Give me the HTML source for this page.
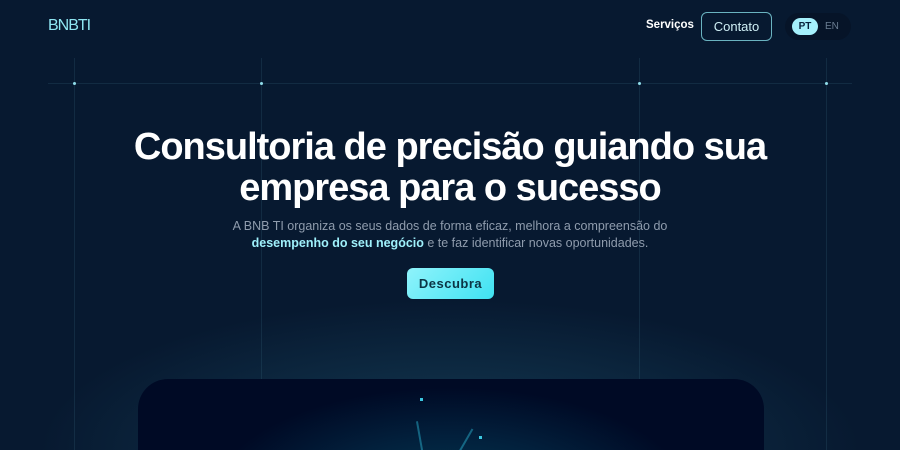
<!DOCTYPE html>
<html><head><meta charset="utf-8"><style>
*{margin:0;padding:0;box-sizing:border-box}
html,body{width:900px;height:450px;overflow:hidden}
body{background:#071930;font-family:"Liberation Sans",sans-serif}
#w{position:relative;width:900px;height:450px;overflow:hidden}
.glow{position:absolute;left:40px;top:250px;width:820px;height:200px;border-radius:50% 50% 0 0/100% 100% 0 0;background:radial-gradient(ellipse 410px 150px at 50% 100%,rgba(30,80,100,.8) 0%,rgba(20,60,85,.5) 50%,rgba(7,25,48,0) 100%)}
.vl{position:absolute;top:58px;height:392px;width:1px;background:rgba(60,110,130,.22)}
.hl{position:absolute;left:48px;width:804px;top:83px;height:1px;background:rgba(60,110,130,.22)}
.dot{position:absolute;top:82px;width:3px;height:3px;background:#8fdcea;border-radius:50%}
.logo{position:absolute;left:48px;top:17px;color:#8fe6f2;font-size:16px;letter-spacing:-1px}
.nav{position:absolute;left:646px;top:19px;color:#fff;font-size:11.5px;font-weight:bold}
.btn{position:absolute;left:701px;top:12px;width:71px;height:29px;border:1px solid #6ab3c0;border-radius:6px;color:#cfeff5;font-size:13px;text-align:center;line-height:27px}
.lang{position:absolute;left:785px;top:13px;width:66px;height:27px;border-radius:14px;background:#061428}
.pt{position:absolute;left:7px;top:5px;width:26px;height:17px;border-radius:9px;background:#a5f0fb;color:#07213a;font-size:10px;font-weight:bold;text-align:center;line-height:17px}
.en{position:absolute;left:40px;top:5px;color:#6a7d92;font-size:10px;line-height:17px}
h1{position:absolute;left:0;width:900px;top:127px;text-align:center;color:#fff;font-size:38px;line-height:41px;font-weight:bold;letter-spacing:-1px}
p{position:absolute;left:0;width:900px;top:218px;text-align:center;color:#8f9cad;font-size:12.5px;line-height:17px}
p b{color:#9ff0fb}
.cta{position:absolute;left:407px;top:268px;width:87px;height:31px;border-radius:6px;background:linear-gradient(135deg,#8ff3fb,#3fe2f2);color:#0b3444;font-size:13px;font-weight:bold;text-align:center;line-height:31px;letter-spacing:.5px}
.card{position:absolute;left:138px;top:379px;width:626px;height:71px;border-radius:30px 30px 0 0;background:radial-gradient(ellipse 300px 140px at 50% 170%,#053a52 0%,#02203c 45%,#000a25 80%);overflow:hidden}
.ray{position:absolute;width:2px;background:rgba(40,170,200,.5)}
</style></head><body><div id="w">
<div class="glow"></div>
<div class="vl" style="left:74px"></div><div class="vl" style="left:261px"></div><div class="vl" style="left:639px"></div><div class="vl" style="left:826px"></div>
<div class="hl"></div>
<div class="dot" style="left:73px"></div><div class="dot" style="left:260px"></div><div class="dot" style="left:638px"></div><div class="dot" style="left:825px"></div>
<div class="logo">BNBTI</div>
<div class="nav">Serviços</div>
<div class="btn">Contato</div>
<div class="lang"><div class="pt">PT</div><div class="en">EN</div></div>
<h1>Consultoria de precisão guiando sua<br>empresa para o sucesso</h1>
<p>A BNB TI organiza os seus dados de forma eficaz, melhora a compreensão do<br><b>desempenho do seu negócio</b> e te faz identificar novas oportunidades.</p>
<div class="cta">Descubra</div>
<div class="card">
<div class="ray" style="left:281px;top:42px;height:35px;transform:rotate(-10deg)"></div>
<div class="ray" style="left:326px;top:48px;height:30px;transform:rotate(30deg)"></div>
<div style="position:absolute;left:282px;top:19px;width:3px;height:3px;background:#3cc7e0"></div>
<div style="position:absolute;left:341px;top:57px;width:3px;height:3px;background:#3cc7e0"></div>
</div>
</div></body></html>
